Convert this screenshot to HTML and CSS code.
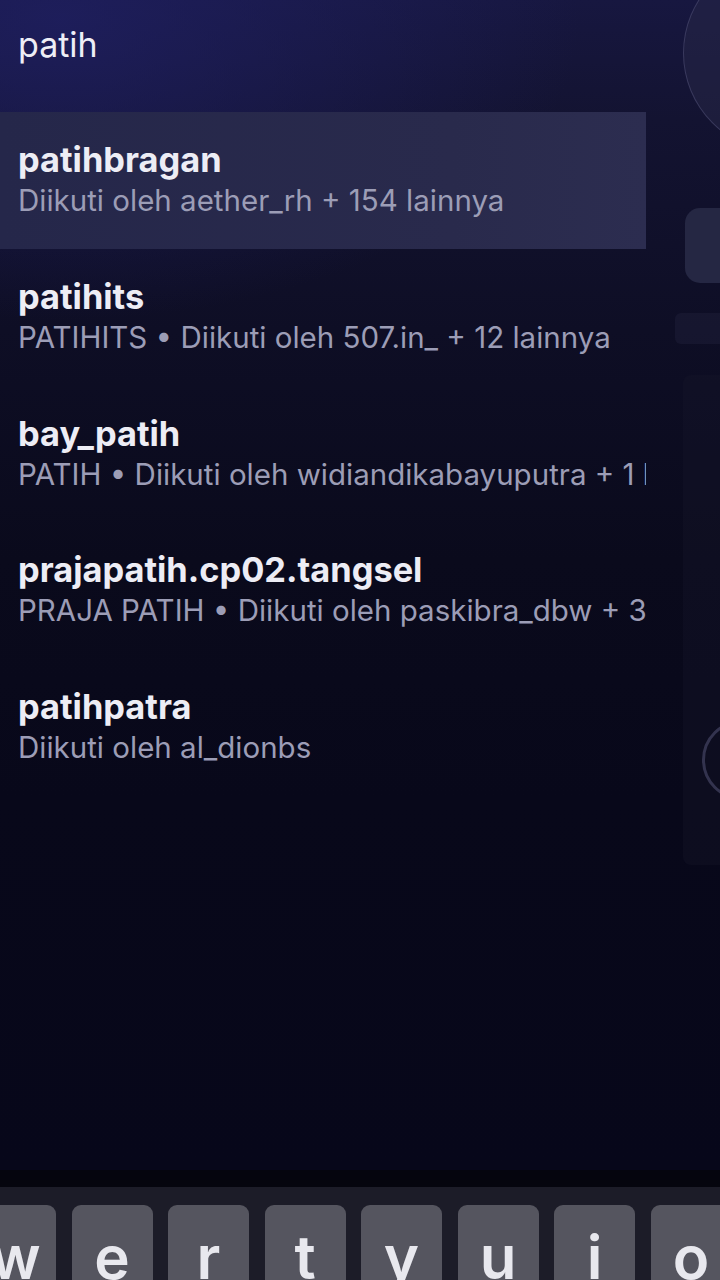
FILE: index.html
```html
<!DOCTYPE html>
<html lang="id">
<head>
<meta charset="utf-8">
<title>Cari: patih</title>
<link rel="stylesheet" href="styles.css">
</head>
<body>
<div class="screen">
  <div class="backdrop" aria-hidden="true">
    <div class="bd-circle"></div>
    <div class="bd-pill"></div>
    <div class="bd-bar"></div>
    <div class="bd-panel"><div class="bd-ring"></div></div>
  </div>

  <header class="search">
    <span class="query">patih</span>
  </header>

  <ul class="results">
    <li class="result active">
      <span class="name">patihbragan</span>
      <span class="meta">Diikuti oleh aether_rh + 154 lainnya</span>
    </li>
    <li class="result">
      <span class="name">patihits</span>
      <span class="meta">PATIHITS • Diikuti oleh 507.in_ + 12 lainnya</span>
    </li>
    <li class="result">
      <span class="name">bay_patih</span>
      <span class="meta">PATIH • Diikuti oleh widiandikabayuputra + 1 lainnya</span>
    </li>
    <li class="result">
      <span class="name">prajapatih.cp02.tangsel</span>
      <span class="meta">PRAJA PATIH • Diikuti oleh paskibra_dbw + 3 lainnya</span>
    </li>
    <li class="result">
      <span class="name">patihpatra</span>
      <span class="meta">Diikuti oleh al_dionbs</span>
    </li>
  </ul>

  <div class="fill"></div>

  <div class="keyboard">
    <div class="kb-edge"></div>
    <div class="kb-body">
      <div class="keys">
        <span class="key">w</span>
        <span class="key">e</span>
        <span class="key">r</span>
        <span class="key">t</span>
        <span class="key">y</span>
        <span class="key">u</span>
        <span class="key">i</span>
        <span class="key">o</span>
      </div>
    </div>
  </div>
</div>
</body>
</html>
```

FILE: styles.css
```css
* { box-sizing: border-box; }

html, body {
  margin: 0;
  padding: 0;
  background: #07071a;
}

.screen {
  position: relative;
  width: 720px;
  height: 1280px;
  overflow: hidden;
  display: flex;
  flex-direction: column;
  font-family: Inter, "Noto Sans", "Liberation Sans", sans-serif;
  background:
    radial-gradient(ellipse 520px 300px at 60px 20px, rgba(32, 32, 100, 0.75), rgba(32, 32, 100, 0) 100%),
    linear-gradient(180deg, #171740 0px, #131331 120px, #0e0e25 330px, #0a0a1c 560px, #08081a 800px, #07071a 1170px);
}

/* faint background UI peeking out on the right edge */
.backdrop {
  position: absolute;
  inset: 0;
  pointer-events: none;
}
.bd-circle {
  position: absolute;
  left: 683px;
  top: -46px;
  width: 198px;
  height: 198px;
  border-radius: 50%;
  background: rgba(40, 40, 72, 0.5);
  border: 1.5px solid rgba(90, 90, 130, 0.45);
}
.bd-pill {
  position: absolute;
  left: 685px;
  top: 208px;
  width: 60px;
  height: 75px;
  border-radius: 15px;
  background: #252743;
}
.bd-bar {
  position: absolute;
  left: 675px;
  top: 313px;
  width: 60px;
  height: 31px;
  border-radius: 6px;
  background: rgba(36, 36, 62, 0.4);
}
.bd-panel {
  position: absolute;
  left: 683px;
  top: 375px;
  width: 60px;
  height: 490px;
  border-radius: 8px;
  background: rgba(22, 22, 44, 0.35);
}
.bd-ring {
  position: absolute;
  left: 19px;
  top: 345px;
  width: 80px;
  height: 80px;
  border-radius: 50%;
  border: 3px solid rgba(110, 110, 150, 0.4);
}

.search {
  position: relative;
  height: 112px;
  padding: 25px 0 0 18px;
}
.query {
  display: block;
  font-size: 34px;
  line-height: 40px;
  color: #eeeef6;
  font-weight: 400;
}

.results {
  position: relative;
  list-style: none;
  margin: 0;
  padding: 0;
  width: 646px;
}
.result {
  height: 136.75px;
  padding: 28px 0 0 18px;
  display: flex;
  flex-direction: column;
  overflow: hidden;
  white-space: nowrap;
}
.result.active {
  background: linear-gradient(90deg, #25274a 0%, #292a4c 70%, #2c2d50 100%);
}
.name {
  font-size: 34.4px;
  line-height: 40px;
  font-weight: 700;
  color: #ededf5;
}
.meta {
  font-size: 29.5px;
  line-height: 36px;
  margin-top: 2px;
  color: #9c9db6;
}

.fill { flex: 1; }

.keyboard {
  position: relative;
  height: 110px;
  display: flex;
  flex-direction: column;
}
.kb-edge {
  height: 17px;
  background: #05050e;
}
.kb-body {
  flex: 1;
  background: #1c1c28;
  padding-top: 18px;
  overflow: hidden;
}
.keys {
  display: flex;
  gap: 15.5px;
  margin-left: -25px;
}
.key {
  flex: 0 0 81px;
  height: 90px;
  border-radius: 9px;
  background: #55555f;
  color: #e8e8ee;
  font-size: 60px;
  font-weight: 600;
  line-height: 1;
  text-align: center;
  padding-top: 22px;
}
```
